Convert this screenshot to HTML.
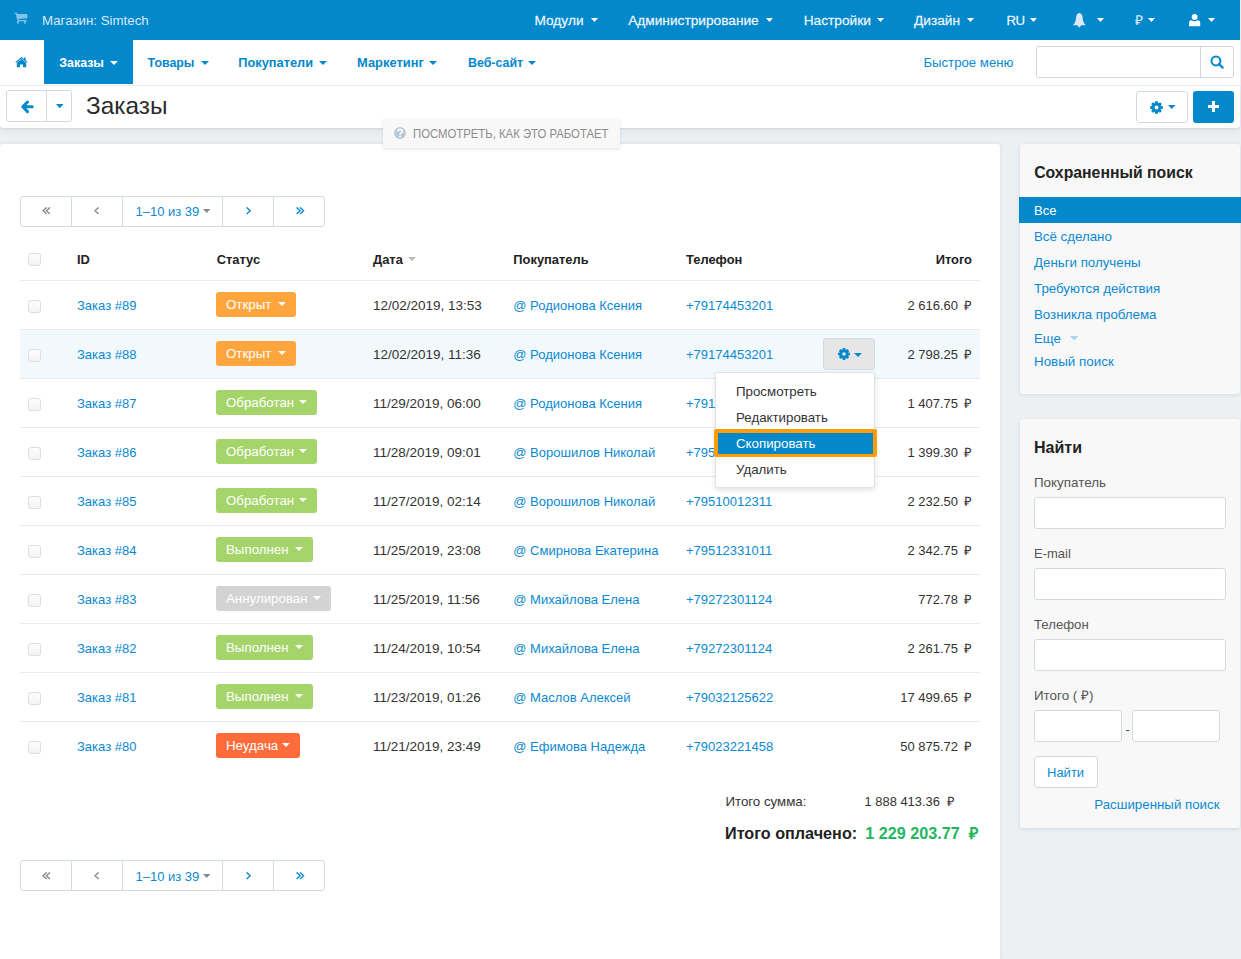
<!DOCTYPE html>
<html><head><meta charset="utf-8"><title>Заказы</title>
<style>
html,body{margin:0;padding:0;}
body{width:1241px;height:959px;position:relative;overflow:hidden;font-family:"Liberation Sans",sans-serif;background:#edf0f2;}
.t{position:absolute;white-space:nowrap;}
.b{position:absolute;}
</style></head><body>
<div class="b" style="left:0px;top:0px;width:1241px;height:959px;background:#edf0f2;"></div>
<div class="b" style="left:0px;top:0px;width:1240px;height:40px;background:#0388cc;"></div>
<div class="b" style="left:0px;top:39px;width:1240px;height:1px;background:#0384c6;"></div>
<div class="b" style="left:0px;top:40px;width:1240px;height:46px;background:#fff;border-bottom:1px solid #edf0f2;box-sizing:border-box;"></div>
<div class="b" style="left:0px;top:86px;width:1240px;height:42px;background:#fff;border-radius:0 0 4px 4px;box-shadow:0 1px 2px rgba(0,0,0,0.07), 0 3px 8px rgba(0,0,0,0.05);"></div>
<div class="b" style="left:0px;top:144px;width:1000px;height:815px;background:#fff;border-radius:3px 3px 0 0;box-shadow:0 0 4px rgba(0,0,0,0.09);"></div>
<div class="b" style="left:1020px;top:144px;width:220px;height:250px;background:#f8f8f8;border-radius:3px;box-shadow:0 1px 4px rgba(0,0,0,0.1);"></div>
<div class="b" style="left:1020px;top:419px;width:220px;height:409px;background:#f8f8f8;border-radius:3px;box-shadow:0 1px 4px rgba(0,0,0,0.1);"></div>
<svg class="b" style="left:14px;top:12px" width="14" height="13" viewBox="0 0 14 13"><path d="M0.5 0.8 L2.8 0.8 L3.5 2 L13.4 2 L13.4 6.3 L4.4 7 L4.6 8 L12.6 8 L12.6 9.3 L3.4 9.3 L1.9 2.1 L0.5 2.1 Z" fill="rgba(255,255,255,0.5)"/><rect x="3.2" y="9" width="1.6" height="2.7" fill="rgba(255,255,255,0.5)"/><rect x="10.2" y="9" width="1.6" height="2.7" fill="rgba(255,255,255,0.5)"/></svg>
<div class="t" style="top:11.89px;font-size:13.3px;line-height:17px;color:rgba(255,255,255,0.85);left:42px;">Магазин: Simtech</div>
<div class="t" style="top:11.85px;font-size:13.7px;line-height:18px;color:rgba(255,255,255,0.92);left:534.5px;-webkit-text-stroke:0.3px rgba(255,255,255,0.8);">Модули</div>
<svg class="b" style="left:591px;top:18px;overflow:visible" width="7" height="4" viewBox="0 0 7 4"><path d="M0 0 L7 0 L3.5 4 Z" fill="#fff"/></svg>
<div class="t" style="top:11.85px;font-size:13.7px;line-height:18px;color:rgba(255,255,255,0.92);left:628.2px;-webkit-text-stroke:0.3px rgba(255,255,255,0.8);">Администрирование</div>
<svg class="b" style="left:766px;top:18px;overflow:visible" width="7" height="4" viewBox="0 0 7 4"><path d="M0 0 L7 0 L3.5 4 Z" fill="#fff"/></svg>
<div class="t" style="top:11.85px;font-size:13.7px;line-height:18px;color:rgba(255,255,255,0.92);left:803.7px;-webkit-text-stroke:0.3px rgba(255,255,255,0.8);">Настройки</div>
<svg class="b" style="left:877px;top:18px;overflow:visible" width="7" height="4" viewBox="0 0 7 4"><path d="M0 0 L7 0 L3.5 4 Z" fill="#fff"/></svg>
<div class="t" style="top:11.85px;font-size:13.7px;line-height:18px;color:rgba(255,255,255,0.92);left:914px;-webkit-text-stroke:0.3px rgba(255,255,255,0.8);">Дизайн</div>
<svg class="b" style="left:967px;top:18px;overflow:visible" width="7" height="4" viewBox="0 0 7 4"><path d="M0 0 L7 0 L3.5 4 Z" fill="#fff"/></svg>
<div class="t" style="top:11.83px;font-size:13.2px;line-height:17px;color:rgba(255,255,255,0.92);letter-spacing:-0.6px;left:1006.6px;-webkit-text-stroke:0.3px rgba(255,255,255,0.8);">RU</div>
<svg class="b" style="left:1030px;top:18px;overflow:visible" width="7" height="4" viewBox="0 0 7 4"><path d="M0 0 L7 0 L3.5 4 Z" fill="#fff"/></svg>
<svg class="b" style="left:1072.5px;top:12.5px" width="13" height="15" viewBox="0 0 13 15"><path d="M6.3 0.1 C7.6 0.1 8.6 1.2 9.3 2.5 C9.7 4.5 9.9 7.5 10.6 9.3 C11.2 10.6 12.2 11.4 12.7 12.15 L0 12.15 C0.5 11.4 1.5 10.6 2.1 9.3 C2.8 7.5 3 4.5 3.4 2.5 C4.1 1.2 5.1 0.1 6.3 0.1 Z M4.4 12.1 L8.1 12.1 L6.9 14.2 L5.6 14.2 Z" fill="#dce9f3"/></svg>
<svg class="b" style="left:1097px;top:18px;overflow:visible" width="7" height="4" viewBox="0 0 7 4"><path d="M0 0 L7 0 L3.5 4 Z" fill="#fff"/></svg>
<div class="t" style="top:11.85px;font-size:13.7px;line-height:18px;color:rgba(255,255,255,0.92);left:1134.6px;">₽</div>
<svg class="b" style="left:1148px;top:18px;overflow:visible" width="7" height="4" viewBox="0 0 7 4"><path d="M0 0 L7 0 L3.5 4 Z" fill="#fff"/></svg>
<svg class="b" style="left:1189px;top:13.7px" width="12" height="13" viewBox="0 0 12 13"><circle cx="5.65" cy="2.95" r="2.9" fill="#fff"/><path d="M0 12.2 L0 9 C0 7.3 0.8 6.3 2.4 6.2 C3.2 6.9 4.3 7.3 5.6 7.3 C6.9 7.3 8 6.9 8.8 6.2 C10.4 6.3 11.2 7.3 11.2 9 L11.2 12.2 Z" fill="#fff"/></svg>
<svg class="b" style="left:1208px;top:18px;overflow:visible" width="7" height="4" viewBox="0 0 7 4"><path d="M0 0 L7 0 L3.5 4 Z" fill="#fff"/></svg>
<svg class="b" style="left:15px;top:56.5px" width="13" height="11" viewBox="0 0 13 11"><path d="M0.3 5 L6.5 0 L9 2 L9 0.6 L10.6 0.6 L10.6 3.3 L12.7 5 L12 5.8 L6.5 1.4 L1 5.8 Z" fill="#0388cc"/><path d="M1.8 5.8 L6.5 2 L11.2 5.8 L11.2 10.2 L8 10.2 L8 7.4 L5 7.4 L5 10.2 L1.8 10.2 Z" fill="#0388cc"/></svg>
<div class="b" style="left:44px;top:40px;width:89px;height:44px;background:#0388cc;"></div>
<div class="t" style="top:54.70px;font-size:12.4px;line-height:16px;color:#fff;font-weight:700;left:59.3px;">Заказы</div>
<svg class="b" style="left:110px;top:61px;overflow:visible" width="8" height="4" viewBox="0 0 8 4"><path d="M0 0 L8 0 L4.0 4 Z" fill="#fff"/></svg>
<div class="t" style="top:54.70px;font-size:12.4px;line-height:16px;color:#0388cc;font-weight:700;left:147.6px;">Товары</div>
<svg class="b" style="left:200.5px;top:61px;overflow:visible" width="8" height="4" viewBox="0 0 8 4"><path d="M0 0 L8 0 L4.0 4 Z" fill="#0388cc"/></svg>
<div class="t" style="top:54.06px;font-size:12.8px;line-height:17px;color:#0388cc;font-weight:700;left:238.3px;">Покупатели</div>
<svg class="b" style="left:318.5px;top:61px;overflow:visible" width="8" height="4" viewBox="0 0 8 4"><path d="M0 0 L8 0 L4.0 4 Z" fill="#0388cc"/></svg>
<div class="t" style="top:54.03px;font-size:12.9px;line-height:17px;color:#0388cc;font-weight:700;left:357px;">Маркетинг</div>
<svg class="b" style="left:429px;top:61px;overflow:visible" width="8" height="4" viewBox="0 0 8 4"><path d="M0 0 L8 0 L4.0 4 Z" fill="#0388cc"/></svg>
<div class="t" style="top:54.70px;font-size:12.4px;line-height:16px;color:#0388cc;font-weight:700;left:468px;">Веб-сайт</div>
<svg class="b" style="left:528px;top:61px;overflow:visible" width="8" height="4" viewBox="0 0 8 4"><path d="M0 0 L8 0 L4.0 4 Z" fill="#0388cc"/></svg>
<div class="t" style="top:53.93px;font-size:13.2px;line-height:17px;color:#0b89d2;left:923.4px;">Быстрое меню</div>
<div class="b" style="left:1036px;top:46px;width:197.5px;height:31.5px;background:#fff;border:1px solid #cfd8e0;border-radius:3px;box-sizing:border-box;"></div>
<div class="b" style="left:1200px;top:46.5px;width:1px;height:30.5px;background:#cfd8e0;"></div>
<svg class="b" style="left:1210.3px;top:55px" width="14" height="14" viewBox="0 0 14 14"><circle cx="5.95" cy="5.95" r="4.45" fill="none" stroke="#0388cc" stroke-width="2"/><path d="M9.1 9.1 L12.6 12.6" stroke="#0388cc" stroke-width="2.2" stroke-linecap="round"/></svg>
<div class="b" style="left:6px;top:90px;width:66px;height:31.6px;background:#fff;border:1px solid #d2dbe3;border-radius:3px;box-sizing:border-box;"></div>
<div class="b" style="left:46px;top:90.5px;width:1px;height:30.8px;background:#d2dbe3;"></div>
<svg class="b" style="left:20.5px;top:99.5px" width="13" height="14" viewBox="0 0 13 14"><path d="M6.5 2 L1.8 6.8 L6.5 11.6 M2.5 6.8 L11.2 6.8" fill="none" stroke="#0388cc" stroke-width="3" stroke-linecap="round" stroke-linejoin="round"/></svg>
<svg class="b" style="left:55.5px;top:103.8px;overflow:visible" width="7.5" height="4.2" viewBox="0 0 7.5 4.2"><path d="M0 0 L7.5 0 L3.75 4.2 Z" fill="#0388cc"/></svg>
<div class="t" style="top:89.55px;font-size:24.4px;line-height:32px;color:#2b2b2b;left:86px;">Заказы</div>
<div class="b" style="left:1136px;top:91px;width:51.5px;height:31.6px;background:#fff;border:1px solid #d2dbe3;border-radius:3px;box-sizing:border-box;"></div>
<svg class="b" style="left:1149.5px;top:100.5px" width="13" height="13" viewBox="-6.5 -6.5 13 13"><g fill="#0388cc"><circle r="4.6"/><rect x="-1.5" y="-6.3" width="3" height="12.6" rx="0.6"/><rect x="-1.5" y="-6.3" width="3" height="12.6" rx="0.6" transform="rotate(45)"/><rect x="-1.5" y="-6.3" width="3" height="12.6" rx="0.6" transform="rotate(90)"/><rect x="-1.5" y="-6.3" width="3" height="12.6" rx="0.6" transform="rotate(135)"/></g><circle r="1.9" fill="#fff"/></svg>
<svg class="b" style="left:1167.5px;top:105px;overflow:visible" width="7.5" height="4" viewBox="0 0 7.5 4"><path d="M0 0 L7.5 0 L3.75 4 Z" fill="#0388cc"/></svg>
<div class="b" style="left:1193px;top:91px;width:41px;height:31.5px;background:#0388cc;border-radius:3px;"></div>
<div class="b" style="left:1207.8px;top:105px;width:11.2px;height:3px;background:#fff;"></div>
<div class="b" style="left:1212px;top:101px;width:3px;height:11px;background:#fff;"></div>
<div class="b" style="left:383px;top:118.5px;width:236.5px;height:29.5px;background:#f8f8f8;box-shadow:0 1px 3px rgba(0,0,0,0.12);"></div>
<svg class="b" style="left:394.2px;top:126.8px" width="12" height="12" viewBox="0 0 12 12"><circle cx="6" cy="6" r="5.9" fill="#bac8d3"/><path d="M3.7 4.5 C3.9 3.1 4.8 2.5 6 2.5 C7.3 2.5 8.3 3.3 8.3 4.4 C8.3 5.8 6.2 5.9 6.1 7.4" fill="none" stroke="#f8f8f8" stroke-width="1.8"/><rect x="5.1" y="8.5" width="1.9" height="1.9" fill="#f8f8f8"/></svg>
<div class="t" style="top:125.93px;font-size:12.6px;line-height:16px;color:#8c8c8c;left:413.4px;transform:scaleX(0.9);transform-origin:0 0;">ПОСМОТРЕТЬ, КАК ЭТО РАБОТАЕТ</div>
<div class="b" style="left:20px;top:195.5px;width:305px;height:31px;background:#fff;border:1px solid #d2dbe3;border-radius:3px;box-sizing:border-box;"></div>
<div class="b" style="left:71px;top:195.5px;width:1px;height:31px;background:#d2dbe3;"></div>
<div class="b" style="left:122px;top:195.5px;width:1px;height:31px;background:#d2dbe3;"></div>
<div class="b" style="left:222px;top:195.5px;width:1px;height:31px;background:#d2dbe3;"></div>
<div class="b" style="left:273px;top:195.5px;width:1px;height:31px;background:#d2dbe3;"></div>
<svg class="b" style="left:41.8px;top:207.3px" width="9" height="8" viewBox="0 0 9 8"><path d="M4.6 0.4 L1 3.75 L4.6 7.1 M8 0.4 L4.4 3.75 L8 7.1" fill="none" stroke="#8b8b8b" stroke-width="1.35"/></svg>
<svg class="b" style="left:94.2px;top:207.3px" width="9" height="8" viewBox="0 0 9 8"><path d="M4.6 0.4 L1 3.75 L4.6 7.1" fill="none" stroke="#8b8b8b" stroke-width="1.35"/></svg>
<div class="t" style="top:203.00px;font-size:13px;line-height:17px;color:#0b89d2;left:135.5px;">1–10 из 39</div>
<svg class="b" style="left:202.8px;top:209.0px;overflow:visible" width="7.5" height="4" viewBox="0 0 7.5 4"><path d="M0 0 L7.5 0 L3.75 4 Z" fill="#8b8b8b"/></svg>
<svg class="b" style="left:245.8px;top:207.3px" width="9" height="8" viewBox="0 0 9 8"><path d="M0.6 0.4 L4.2 3.75 L0.6 7.1" fill="none" stroke="#0b89d2" stroke-width="1.35"/></svg>
<svg class="b" style="left:295.6px;top:207.3px" width="9" height="8" viewBox="0 0 9 8"><path d="M0.6 0.4 L4.2 3.75 L0.6 7.1 M4 0.4 L7.6 3.75 L4 7.1" fill="none" stroke="#0b89d2" stroke-width="1.35"/></svg>
<div class="b" style="left:20px;top:860.3px;width:305px;height:31px;background:#fff;border:1px solid #d2dbe3;border-radius:3px;box-sizing:border-box;"></div>
<div class="b" style="left:71px;top:860.3px;width:1px;height:31px;background:#d2dbe3;"></div>
<div class="b" style="left:122px;top:860.3px;width:1px;height:31px;background:#d2dbe3;"></div>
<div class="b" style="left:222px;top:860.3px;width:1px;height:31px;background:#d2dbe3;"></div>
<div class="b" style="left:273px;top:860.3px;width:1px;height:31px;background:#d2dbe3;"></div>
<svg class="b" style="left:41.8px;top:872.0999999999999px" width="9" height="8" viewBox="0 0 9 8"><path d="M4.6 0.4 L1 3.75 L4.6 7.1 M8 0.4 L4.4 3.75 L8 7.1" fill="none" stroke="#8b8b8b" stroke-width="1.35"/></svg>
<svg class="b" style="left:94.2px;top:872.0999999999999px" width="9" height="8" viewBox="0 0 9 8"><path d="M4.6 0.4 L1 3.75 L4.6 7.1" fill="none" stroke="#8b8b8b" stroke-width="1.35"/></svg>
<div class="t" style="top:867.80px;font-size:13px;line-height:17px;color:#0b89d2;left:135.5px;">1–10 из 39</div>
<svg class="b" style="left:202.8px;top:873.8px;overflow:visible" width="7.5" height="4" viewBox="0 0 7.5 4"><path d="M0 0 L7.5 0 L3.75 4 Z" fill="#8b8b8b"/></svg>
<svg class="b" style="left:245.8px;top:872.0999999999999px" width="9" height="8" viewBox="0 0 9 8"><path d="M0.6 0.4 L4.2 3.75 L0.6 7.1" fill="none" stroke="#0b89d2" stroke-width="1.35"/></svg>
<svg class="b" style="left:295.6px;top:872.0999999999999px" width="9" height="8" viewBox="0 0 9 8"><path d="M0.6 0.4 L4.2 3.75 L0.6 7.1 M4 0.4 L7.6 3.75 L4 7.1" fill="none" stroke="#0b89d2" stroke-width="1.35"/></svg>
<div class="b" style="left:28px;top:252.8px;width:13px;height:13px;background:linear-gradient(#fdfdfd,#f4f4f4);border:1px solid #dedede;border-radius:3px;box-sizing:border-box;"></div>
<div class="t" style="top:251.23px;font-size:12.9px;line-height:17px;color:#222;font-weight:700;left:77px;">ID</div>
<div class="t" style="top:251.23px;font-size:12.9px;line-height:17px;color:#222;font-weight:700;left:216.7px;">Статус</div>
<div class="t" style="top:251.23px;font-size:12.9px;line-height:17px;color:#222;font-weight:700;left:373px;">Дата</div>
<svg class="b" style="left:408px;top:256.6px;overflow:visible" width="8" height="4.3" viewBox="0 0 8 4.3"><path d="M0 0 L8 0 L4.0 4.3 Z" fill="#bdbdbd"/></svg>
<div class="t" style="top:251.23px;font-size:12.9px;line-height:17px;color:#222;font-weight:700;left:513.3px;">Покупатель</div>
<div class="t" style="top:251.23px;font-size:12.9px;line-height:17px;color:#222;font-weight:700;left:686px;">Телефон</div>
<div class="t" style="top:251.23px;font-size:12.9px;line-height:17px;color:#222;font-weight:700;right:269px;">Итого</div>
<div class="b" style="left:20px;top:280px;width:960px;height:1px;background:#e9eaeb;"></div>
<div class="b" style="left:20px;top:329px;width:960px;height:1px;background:#e9eaeb;"></div>
<div class="b" style="left:28px;top:300px;width:13px;height:13px;background:linear-gradient(#fdfdfd,#f4f4f4);border:1px solid #dedede;border-radius:3px;box-sizing:border-box;"></div>
<div class="t" style="top:297.00px;font-size:13px;line-height:17px;color:#0b89d2;left:77px;">Заказ #89</div>
<div class="b" style="left:216px;top:292px;width:80px;height:24.6px;background:#ffa53e;border-radius:3px;"></div>
<div class="t" style="top:295.99px;font-size:13.3px;line-height:17px;color:#fff;left:226px;">Открыт</div>
<svg class="b" style="left:277.5px;top:302.3px;overflow:visible" width="8" height="4" viewBox="0 0 8 4"><path d="M0 0 L8 0 L4.0 4 Z" fill="#fff"/></svg>
<div class="t" style="top:296.82px;font-size:13.5px;line-height:18px;color:#333;left:373px;">12/02/2019, 13:53</div>
<div class="t" style="top:297.00px;font-size:13px;line-height:17px;color:#0b89d2;left:513.3px;">@ Родионова Ксения</div>
<div class="t" style="top:297.00px;font-size:13px;line-height:17px;color:#0b89d2;left:686px;">+79174453201</div>
<div class="t" style="top:297.00px;font-size:13px;line-height:17px;color:#333;right:283px;">2 616.60</div>
<div class="t" style="top:297.00px;font-size:13px;line-height:17px;color:#333;left:963.6px;">₽</div>
<div class="b" style="left:20px;top:330px;width:960px;height:48px;background:#f2f9fd;"></div>
<div class="b" style="left:20px;top:378px;width:960px;height:1px;background:#e9eaeb;"></div>
<div class="b" style="left:28px;top:349px;width:13px;height:13px;background:linear-gradient(#fdfdfd,#f4f4f4);border:1px solid #dedede;border-radius:3px;box-sizing:border-box;"></div>
<div class="t" style="top:346.00px;font-size:13px;line-height:17px;color:#0b89d2;left:77px;">Заказ #88</div>
<div class="b" style="left:216px;top:341px;width:80px;height:24.6px;background:#ffa53e;border-radius:3px;"></div>
<div class="t" style="top:344.99px;font-size:13.3px;line-height:17px;color:#fff;left:226px;">Открыт</div>
<svg class="b" style="left:277.5px;top:351.3px;overflow:visible" width="8" height="4" viewBox="0 0 8 4"><path d="M0 0 L8 0 L4.0 4 Z" fill="#fff"/></svg>
<div class="t" style="top:345.82px;font-size:13.5px;line-height:18px;color:#333;left:373px;">12/02/2019, 11:36</div>
<div class="t" style="top:346.00px;font-size:13px;line-height:17px;color:#0b89d2;left:513.3px;">@ Родионова Ксения</div>
<div class="t" style="top:346.00px;font-size:13px;line-height:17px;color:#0b89d2;left:686px;">+79174453201</div>
<div class="t" style="top:346.00px;font-size:13px;line-height:17px;color:#333;right:283px;">2 798.25</div>
<div class="t" style="top:346.00px;font-size:13px;line-height:17px;color:#333;left:963.6px;">₽</div>
<div class="b" style="left:20px;top:427px;width:960px;height:1px;background:#e9eaeb;"></div>
<div class="b" style="left:28px;top:398px;width:13px;height:13px;background:linear-gradient(#fdfdfd,#f4f4f4);border:1px solid #dedede;border-radius:3px;box-sizing:border-box;"></div>
<div class="t" style="top:395.00px;font-size:13px;line-height:17px;color:#0b89d2;left:77px;">Заказ #87</div>
<div class="b" style="left:216px;top:390px;width:101px;height:24.6px;background:#a5d56a;border-radius:3px;"></div>
<div class="t" style="top:393.99px;font-size:13.3px;line-height:17px;color:#fff;left:226px;">Обработан</div>
<svg class="b" style="left:298.5px;top:400.3px;overflow:visible" width="8" height="4" viewBox="0 0 8 4"><path d="M0 0 L8 0 L4.0 4 Z" fill="#fff"/></svg>
<div class="t" style="top:394.82px;font-size:13.5px;line-height:18px;color:#333;left:373px;">11/29/2019, 06:00</div>
<div class="t" style="top:395.00px;font-size:13px;line-height:17px;color:#0b89d2;left:513.3px;">@ Родионова Ксения</div>
<div class="t" style="top:395.00px;font-size:13px;line-height:17px;color:#0b89d2;left:686px;">+79174453201</div>
<div class="t" style="top:395.00px;font-size:13px;line-height:17px;color:#333;right:283px;">1 407.75</div>
<div class="t" style="top:395.00px;font-size:13px;line-height:17px;color:#333;left:963.6px;">₽</div>
<div class="b" style="left:20px;top:476px;width:960px;height:1px;background:#e9eaeb;"></div>
<div class="b" style="left:28px;top:447px;width:13px;height:13px;background:linear-gradient(#fdfdfd,#f4f4f4);border:1px solid #dedede;border-radius:3px;box-sizing:border-box;"></div>
<div class="t" style="top:444.00px;font-size:13px;line-height:17px;color:#0b89d2;left:77px;">Заказ #86</div>
<div class="b" style="left:216px;top:439px;width:101px;height:24.6px;background:#a5d56a;border-radius:3px;"></div>
<div class="t" style="top:442.99px;font-size:13.3px;line-height:17px;color:#fff;left:226px;">Обработан</div>
<svg class="b" style="left:298.5px;top:449.3px;overflow:visible" width="8" height="4" viewBox="0 0 8 4"><path d="M0 0 L8 0 L4.0 4 Z" fill="#fff"/></svg>
<div class="t" style="top:443.82px;font-size:13.5px;line-height:18px;color:#333;left:373px;">11/28/2019, 09:01</div>
<div class="t" style="top:444.00px;font-size:13px;line-height:17px;color:#0b89d2;left:513.3px;">@ Ворошилов Николай</div>
<div class="t" style="top:444.00px;font-size:13px;line-height:17px;color:#0b89d2;left:686px;">+79510012311</div>
<div class="t" style="top:444.00px;font-size:13px;line-height:17px;color:#333;right:283px;">1 399.30</div>
<div class="t" style="top:444.00px;font-size:13px;line-height:17px;color:#333;left:963.6px;">₽</div>
<div class="b" style="left:20px;top:525px;width:960px;height:1px;background:#e9eaeb;"></div>
<div class="b" style="left:28px;top:496px;width:13px;height:13px;background:linear-gradient(#fdfdfd,#f4f4f4);border:1px solid #dedede;border-radius:3px;box-sizing:border-box;"></div>
<div class="t" style="top:493.00px;font-size:13px;line-height:17px;color:#0b89d2;left:77px;">Заказ #85</div>
<div class="b" style="left:216px;top:488px;width:101px;height:24.6px;background:#a5d56a;border-radius:3px;"></div>
<div class="t" style="top:491.99px;font-size:13.3px;line-height:17px;color:#fff;left:226px;">Обработан</div>
<svg class="b" style="left:298.5px;top:498.3px;overflow:visible" width="8" height="4" viewBox="0 0 8 4"><path d="M0 0 L8 0 L4.0 4 Z" fill="#fff"/></svg>
<div class="t" style="top:492.82px;font-size:13.5px;line-height:18px;color:#333;left:373px;">11/27/2019, 02:14</div>
<div class="t" style="top:493.00px;font-size:13px;line-height:17px;color:#0b89d2;left:513.3px;">@ Ворошилов Николай</div>
<div class="t" style="top:493.00px;font-size:13px;line-height:17px;color:#0b89d2;left:686px;">+79510012311</div>
<div class="t" style="top:493.00px;font-size:13px;line-height:17px;color:#333;right:283px;">2 232.50</div>
<div class="t" style="top:493.00px;font-size:13px;line-height:17px;color:#333;left:963.6px;">₽</div>
<div class="b" style="left:20px;top:574px;width:960px;height:1px;background:#e9eaeb;"></div>
<div class="b" style="left:28px;top:545px;width:13px;height:13px;background:linear-gradient(#fdfdfd,#f4f4f4);border:1px solid #dedede;border-radius:3px;box-sizing:border-box;"></div>
<div class="t" style="top:542.00px;font-size:13px;line-height:17px;color:#0b89d2;left:77px;">Заказ #84</div>
<div class="b" style="left:216px;top:537px;width:97px;height:24.6px;background:#a5d56a;border-radius:3px;"></div>
<div class="t" style="top:540.99px;font-size:13.3px;line-height:17px;color:#fff;left:226px;">Выполнен</div>
<svg class="b" style="left:294.5px;top:547.3px;overflow:visible" width="8" height="4" viewBox="0 0 8 4"><path d="M0 0 L8 0 L4.0 4 Z" fill="#fff"/></svg>
<div class="t" style="top:541.82px;font-size:13.5px;line-height:18px;color:#333;left:373px;">11/25/2019, 23:08</div>
<div class="t" style="top:542.00px;font-size:13px;line-height:17px;color:#0b89d2;left:513.3px;">@ Смирнова Екатерина</div>
<div class="t" style="top:542.00px;font-size:13px;line-height:17px;color:#0b89d2;left:686px;">+79512331011</div>
<div class="t" style="top:542.00px;font-size:13px;line-height:17px;color:#333;right:283px;">2 342.75</div>
<div class="t" style="top:542.00px;font-size:13px;line-height:17px;color:#333;left:963.6px;">₽</div>
<div class="b" style="left:20px;top:623px;width:960px;height:1px;background:#e9eaeb;"></div>
<div class="b" style="left:28px;top:594px;width:13px;height:13px;background:linear-gradient(#fdfdfd,#f4f4f4);border:1px solid #dedede;border-radius:3px;box-sizing:border-box;"></div>
<div class="t" style="top:591.00px;font-size:13px;line-height:17px;color:#0b89d2;left:77px;">Заказ #83</div>
<div class="b" style="left:216px;top:586px;width:115px;height:24.6px;background:#d3d3d3;border-radius:3px;"></div>
<div class="t" style="top:589.99px;font-size:13.3px;line-height:17px;color:#fff;left:226px;">Аннулирован</div>
<svg class="b" style="left:312.5px;top:596.3px;overflow:visible" width="8" height="4" viewBox="0 0 8 4"><path d="M0 0 L8 0 L4.0 4 Z" fill="#fff"/></svg>
<div class="t" style="top:590.82px;font-size:13.5px;line-height:18px;color:#333;left:373px;">11/25/2019, 11:56</div>
<div class="t" style="top:591.00px;font-size:13px;line-height:17px;color:#0b89d2;left:513.3px;">@ Михайлова Елена</div>
<div class="t" style="top:591.00px;font-size:13px;line-height:17px;color:#0b89d2;left:686px;">+79272301124</div>
<div class="t" style="top:591.00px;font-size:13px;line-height:17px;color:#333;right:283px;">772.78</div>
<div class="t" style="top:591.00px;font-size:13px;line-height:17px;color:#333;left:963.6px;">₽</div>
<div class="b" style="left:20px;top:672px;width:960px;height:1px;background:#e9eaeb;"></div>
<div class="b" style="left:28px;top:643px;width:13px;height:13px;background:linear-gradient(#fdfdfd,#f4f4f4);border:1px solid #dedede;border-radius:3px;box-sizing:border-box;"></div>
<div class="t" style="top:640.00px;font-size:13px;line-height:17px;color:#0b89d2;left:77px;">Заказ #82</div>
<div class="b" style="left:216px;top:635px;width:97px;height:24.6px;background:#a5d56a;border-radius:3px;"></div>
<div class="t" style="top:638.99px;font-size:13.3px;line-height:17px;color:#fff;left:226px;">Выполнен</div>
<svg class="b" style="left:294.5px;top:645.3px;overflow:visible" width="8" height="4" viewBox="0 0 8 4"><path d="M0 0 L8 0 L4.0 4 Z" fill="#fff"/></svg>
<div class="t" style="top:639.82px;font-size:13.5px;line-height:18px;color:#333;left:373px;">11/24/2019, 10:54</div>
<div class="t" style="top:640.00px;font-size:13px;line-height:17px;color:#0b89d2;left:513.3px;">@ Михайлова Елена</div>
<div class="t" style="top:640.00px;font-size:13px;line-height:17px;color:#0b89d2;left:686px;">+79272301124</div>
<div class="t" style="top:640.00px;font-size:13px;line-height:17px;color:#333;right:283px;">2 261.75</div>
<div class="t" style="top:640.00px;font-size:13px;line-height:17px;color:#333;left:963.6px;">₽</div>
<div class="b" style="left:20px;top:721px;width:960px;height:1px;background:#e9eaeb;"></div>
<div class="b" style="left:28px;top:692px;width:13px;height:13px;background:linear-gradient(#fdfdfd,#f4f4f4);border:1px solid #dedede;border-radius:3px;box-sizing:border-box;"></div>
<div class="t" style="top:689.00px;font-size:13px;line-height:17px;color:#0b89d2;left:77px;">Заказ #81</div>
<div class="b" style="left:216px;top:684px;width:97px;height:24.6px;background:#a5d56a;border-radius:3px;"></div>
<div class="t" style="top:687.99px;font-size:13.3px;line-height:17px;color:#fff;left:226px;">Выполнен</div>
<svg class="b" style="left:294.5px;top:694.3px;overflow:visible" width="8" height="4" viewBox="0 0 8 4"><path d="M0 0 L8 0 L4.0 4 Z" fill="#fff"/></svg>
<div class="t" style="top:688.82px;font-size:13.5px;line-height:18px;color:#333;left:373px;">11/23/2019, 01:26</div>
<div class="t" style="top:689.00px;font-size:13px;line-height:17px;color:#0b89d2;left:513.3px;">@ Маслов Алексей</div>
<div class="t" style="top:689.00px;font-size:13px;line-height:17px;color:#0b89d2;left:686px;">+79032125622</div>
<div class="t" style="top:689.00px;font-size:13px;line-height:17px;color:#333;right:283px;">17 499.65</div>
<div class="t" style="top:689.00px;font-size:13px;line-height:17px;color:#333;left:963.6px;">₽</div>
<div class="b" style="left:28px;top:741px;width:13px;height:13px;background:linear-gradient(#fdfdfd,#f4f4f4);border:1px solid #dedede;border-radius:3px;box-sizing:border-box;"></div>
<div class="t" style="top:738.00px;font-size:13px;line-height:17px;color:#0b89d2;left:77px;">Заказ #80</div>
<div class="b" style="left:216px;top:733px;width:84px;height:24.6px;background:#ff6b3a;border-radius:3px;"></div>
<div class="t" style="top:736.99px;font-size:13.3px;line-height:17px;color:#fff;left:226px;">Неудача</div>
<svg class="b" style="left:281.5px;top:743.3px;overflow:visible" width="8" height="4" viewBox="0 0 8 4"><path d="M0 0 L8 0 L4.0 4 Z" fill="#fff"/></svg>
<div class="t" style="top:737.82px;font-size:13.5px;line-height:18px;color:#333;left:373px;">11/21/2019, 23:49</div>
<div class="t" style="top:738.00px;font-size:13px;line-height:17px;color:#0b89d2;left:513.3px;">@ Ефимова Надежда</div>
<div class="t" style="top:738.00px;font-size:13px;line-height:17px;color:#0b89d2;left:686px;">+79023221458</div>
<div class="t" style="top:738.00px;font-size:13px;line-height:17px;color:#333;right:283px;">50 875.72</div>
<div class="t" style="top:738.00px;font-size:13px;line-height:17px;color:#333;left:963.6px;">₽</div>
<div class="b" style="left:823px;top:338px;width:51.5px;height:31.5px;background:#e6e6e6;border:1px solid #d3dae1;border-radius:3px;box-sizing:border-box;"></div>
<svg class="b" style="left:837.5px;top:347.5px" width="12" height="12" viewBox="-6 -6 12 12"><g fill="#0388cc"><circle r="4.3"/><rect x="-1.4" y="-5.9" width="2.8" height="11.8" rx="0.5"/><rect x="-1.4" y="-5.9" width="2.8" height="11.8" rx="0.5" transform="rotate(45)"/><rect x="-1.4" y="-5.9" width="2.8" height="11.8" rx="0.5" transform="rotate(90)"/><rect x="-1.4" y="-5.9" width="2.8" height="11.8" rx="0.5" transform="rotate(135)"/></g><circle r="1.8" fill="#e6e6e6"/></svg>
<svg class="b" style="left:854.2px;top:352.8px;overflow:visible" width="8" height="4" viewBox="0 0 8 4"><path d="M0 0 L8 0 L4.0 4 Z" fill="#0388cc"/></svg>
<div class="b" style="left:715px;top:372px;width:159.5px;height:115.5px;background:#fff;border:1px solid #dfe3e6;border-radius:3px;box-sizing:border-box;box-shadow:0 2px 5px rgba(0,0,0,0.12);"></div>
<div class="b" style="left:714px;top:429.3px;width:163px;height:28.2px;background:#ff9c00;border-radius:2px;"></div>
<div class="b" style="left:718px;top:433px;width:155px;height:21px;background:#0388cc;"></div>
<div class="t" style="top:383.19px;font-size:13.3px;line-height:17px;color:#333;left:736px;">Просмотреть</div>
<div class="t" style="top:408.89px;font-size:13.3px;line-height:17px;color:#333;left:736px;">Редактировать</div>
<div class="t" style="top:434.89px;font-size:13.3px;line-height:17px;color:#fff;left:736px;">Скопировать</div>
<div class="t" style="top:460.89px;font-size:13.3px;line-height:17px;color:#333;left:736px;">Удалить</div>
<div class="t" style="top:792.79px;font-size:13.3px;line-height:17px;color:#333;left:725.4px;">Итого сумма:</div>
<div class="t" style="top:792.93px;font-size:12.9px;line-height:17px;color:#333;right:286px;">1 888 413.36&nbsp;&nbsp;₽</div>
<div class="t" style="top:822.59px;font-size:16.2px;line-height:21px;color:#222;font-weight:700;left:725px;">Итого оплачено:</div>
<div class="t" style="top:822.59px;font-size:16.2px;line-height:21px;color:#22b661;font-weight:700;right:263.20000000000005px;">1 229 203.77&nbsp;&nbsp;₽</div>
<div class="t" style="top:162.23px;font-size:15.8px;line-height:21px;color:#222;font-weight:700;left:1034.2px;">Сохраненный поиск</div>
<div class="b" style="left:1019px;top:197px;width:222px;height:26px;background:#0388cc;"></div>
<div class="t" style="top:201.80px;font-size:13px;line-height:17px;color:#fff;left:1034px;">Все</div>
<div class="t" style="top:227.89px;font-size:13.3px;line-height:17px;color:#0b89d2;left:1034px;">Всё сделано</div>
<div class="t" style="top:253.89px;font-size:13.3px;line-height:17px;color:#0b89d2;left:1034px;">Деньги получены</div>
<div class="t" style="top:279.89px;font-size:13.3px;line-height:17px;color:#0b89d2;left:1034px;">Требуются действия</div>
<div class="t" style="top:305.89px;font-size:13.3px;line-height:17px;color:#0b89d2;left:1034px;">Возникла проблема</div>
<div class="t" style="top:329.73px;font-size:13.2px;line-height:17px;color:#0b89d2;left:1034px;">Еще</div>
<svg class="b" style="left:1070.3px;top:336px;overflow:visible" width="8.5" height="4.5" viewBox="0 0 8.5 4.5"><path d="M0 0 L8.5 0 L4.25 4.5 Z" fill="#acd4ee"/></svg>
<div class="t" style="top:352.66px;font-size:13.4px;line-height:17px;color:#0b89d2;left:1034px;">Новый поиск</div>
<div class="t" style="top:436.86px;font-size:16px;line-height:21px;color:#222;font-weight:700;left:1034px;">Найти</div>
<div class="t" style="top:473.66px;font-size:13.4px;line-height:17px;color:#555;left:1034px;">Покупатель</div>
<div class="b" style="left:1034px;top:497px;width:191.5px;height:31.5px;background:#fff;border:1px solid #d2dbe3;border-radius:3px;box-sizing:border-box;"></div>
<div class="t" style="top:544.50px;font-size:13px;line-height:17px;color:#555;left:1034px;">E-mail</div>
<div class="b" style="left:1034px;top:568px;width:191.5px;height:31.5px;background:#fff;border:1px solid #d2dbe3;border-radius:3px;box-sizing:border-box;"></div>
<div class="t" style="top:616.13px;font-size:13.2px;line-height:17px;color:#555;left:1034px;">Телефон</div>
<div class="b" style="left:1034px;top:639px;width:191.5px;height:31.5px;background:#fff;border:1px solid #d2dbe3;border-radius:3px;box-sizing:border-box;"></div>
<div class="t" style="top:686.86px;font-size:13.4px;line-height:17px;color:#555;left:1034px;">Итого ( ₽)</div>
<div class="b" style="left:1034px;top:710px;width:88px;height:31.5px;background:#fff;border:1px solid #d2dbe3;border-radius:3px;box-sizing:border-box;"></div>
<div class="t" style="top:721.00px;font-size:13px;line-height:17px;color:#555;left:1125.5px;">-</div>
<div class="b" style="left:1132px;top:710px;width:88px;height:31.5px;background:#fff;border:1px solid #d2dbe3;border-radius:3px;box-sizing:border-box;"></div>
<div class="b" style="left:1034px;top:756px;width:64px;height:31.5px;background:#fff;border:1px solid #d2dbe3;border-radius:3px;box-sizing:border-box;"></div>
<div class="t" style="top:764.00px;font-size:13px;line-height:17px;color:#0b89d2;left:1047px;">Найти</div>
<div class="t" style="top:795.89px;font-size:13.3px;line-height:17px;color:#0b89d2;right:21.5px;">Расширенный поиск</div>
</body></html>
